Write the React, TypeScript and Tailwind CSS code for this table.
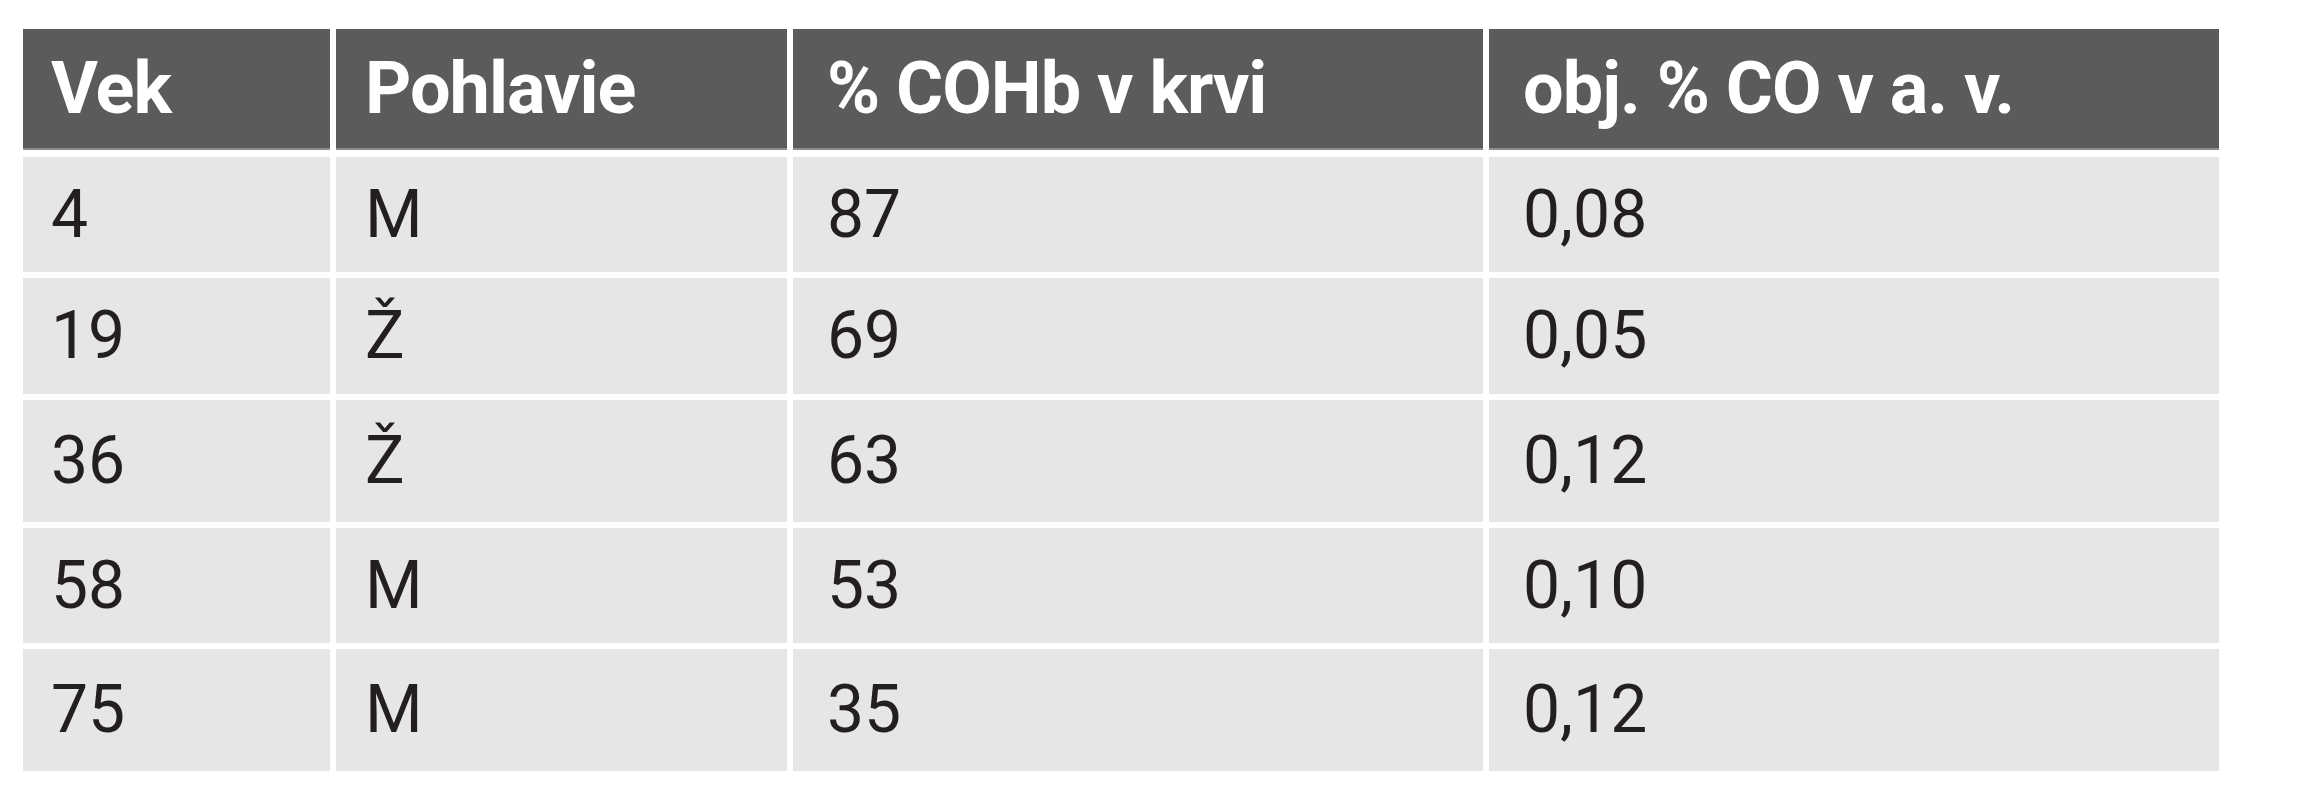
const header = ['Vek', 'Pohlavie', '% COHb v krvi', 'obj. % CO v a. v.'];

const rows = [
  { h: 'h-[115px]', cells: ['4', 'M', '87', '0,08'] },
  { h: 'h-[116px]', cells: ['19', 'Ž', '69', '0,05'] },
  { h: 'h-[122px]', cells: ['36', 'Ž', '63', '0,12'] },
  { h: 'h-[115px]', cells: ['58', 'M', '53', '0,10'] },
  { h: 'h-[122px]', cells: ['75', 'M', '35', '0,12'] },
];

const widths = ['w-[307px] pl-[28px]', 'w-[451px] pl-[29px]', 'w-[690px] pl-[34px]', 'w-[730px] pl-[34px]'];

export default function App() {
  return (
    <div className="w-[2307px] h-[800px] bg-white pt-[29px] pl-[23px] font-['Roboto',sans-serif]">
      <div className="flex flex-col gap-[6px]">
        <div className="flex gap-[6px] mb-[1px]">
          {header.map((t, i) => (
            <div
              key={t}
              className={`${widths[i]} h-[121px] flex items-center bg-[#5b5a5c] border-b-2 border-[#8d8c8e] text-white font-bold text-[72px] leading-none tracking-[-1px]`}
            >
              <span>{t}</span>
            </div>
          ))}
        </div>
        {rows.map((r, ri) => (
          <div key={ri} className="flex gap-[6px]">
            {r.cells.map((c, i) => (
              <div
                key={i}
                className={`${widths[i]} ${r.h} flex items-center bg-[#e6e6e6] text-[#231f20] text-[66px] leading-none`}
              >
                <span>{c}</span>
              </div>
            ))}
          </div>
        ))}
      </div>
    </div>
  );
}
